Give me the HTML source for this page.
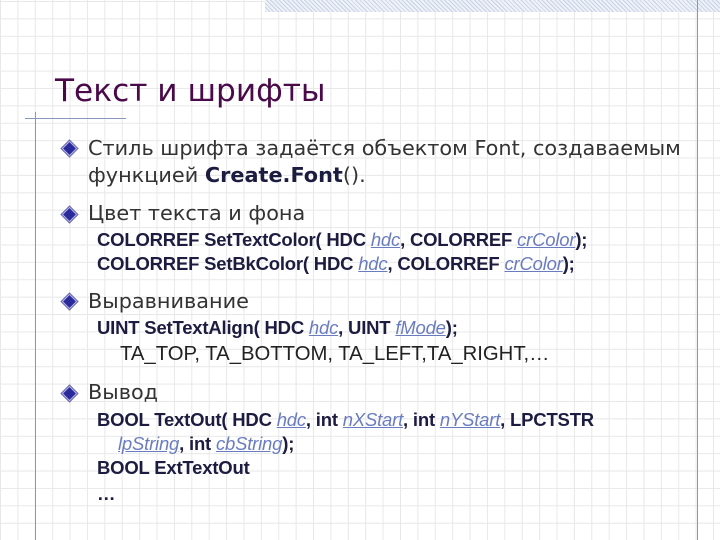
<!DOCTYPE html>
<html><head><meta charset="utf-8"><style>
body{margin:0;width:720px;height:540px;overflow:hidden;position:relative;background-color:#fff;
background-image:linear-gradient(to right,#e8e8e8 1px,transparent 1px),linear-gradient(to bottom,#e8e8e8 1px,transparent 1px);
background-size:17.4px 17.4px;background-position:0 1px;font-family:"DejaVu Sans",sans-serif;}
.band{position:absolute;left:265px;top:0;width:455px;height:12px;background:repeating-linear-gradient(45deg,#c9d3e6 0 1px,#eef1f7 1px 3px);}
.vl{position:absolute;left:697px;top:0;width:1px;height:540px;background:#8a97bd;}
.hl{position:absolute;left:25px;top:118px;width:101px;height:1px;background:#8a97bd;}
.vl2{position:absolute;left:35px;top:112px;width:1px;height:428px;background:#8a97bd;}
.t{position:absolute;white-space:nowrap;}
.title{left:55px;top:73px;font-size:31.2px;color:#4a0a4a;}
.b{font-size:20.8px;color:#333;}
.c{font-family:"Liberation Sans",sans-serif;font-weight:bold;font-size:18.5px;color:#1c1c40;letter-spacing:-0.2px;}
.c i{font-weight:normal;color:#6a7cc0;text-decoration:underline;}
.r{font-family:"Liberation Sans",sans-serif;font-size:20.3px;color:#222;}
.d{position:absolute;width:9px;height:9px;background:#2a2a9a;border:1.5px solid #b8b8e8;transform:rotate(45deg);box-shadow:0 0 0 1px #6a6ab0;}
</style></head><body>
<div class="band"></div><div class="vl"></div><div class="hl"></div><div class="vl2"></div>
<div class="t title">Текст и шрифты</div>
<div class="d" style="left:64px;top:143px"></div>
<div class="t b" style="left:88px;top:136px">Стиль шрифта задаётся объектом Font, создаваемым</div>
<div class="t b" style="left:88px;top:163px">функцией <b style="color:#1c1c40">Create.Font</b>().</div>
<div class="d" style="left:64px;top:209px"></div>
<div class="t b" style="left:88px;top:201px">Цвет текста и фона</div>
<div class="t c" style="left:97px;top:229px">COLORREF SetTextColor( HDC <i>hdc</i>, COLORREF <i>crColor</i>);</div>
<div class="t c" style="left:97px;top:253px">COLORREF SetBkColor( HDC <i>hdc</i>, COLORREF <i>crColor</i>);</div>
<div class="d" style="left:64px;top:296px"></div>
<div class="t b" style="left:88px;top:289px">Выравнивание</div>
<div class="t c" style="left:97px;top:317px">UINT SetTextAlign( HDC <i>hdc</i>, UINT <i>fMode</i>);</div>
<div class="t r" style="left:120px;top:343px">TA_TOP, TA_BOTTOM, TA_LEFT,TA_RIGHT,…</div>
<div class="d" style="left:64px;top:388px"></div>
<div class="t b" style="left:88px;top:380px">Вывод</div>
<div class="t c" style="left:97px;top:409px">BOOL TextOut( HDC <i>hdc</i>, int <i>nXStart</i>, int <i>nYStart</i>, LPCTSTR</div>
<div class="t c" style="left:118px;top:433px"><i>lpString</i>, int <i>cbString</i>);</div>
<div class="t c" style="left:97px;top:457px">BOOL ExtTextOut</div>
<div class="t c" style="left:97px;top:483px">…</div>
</body></html>
